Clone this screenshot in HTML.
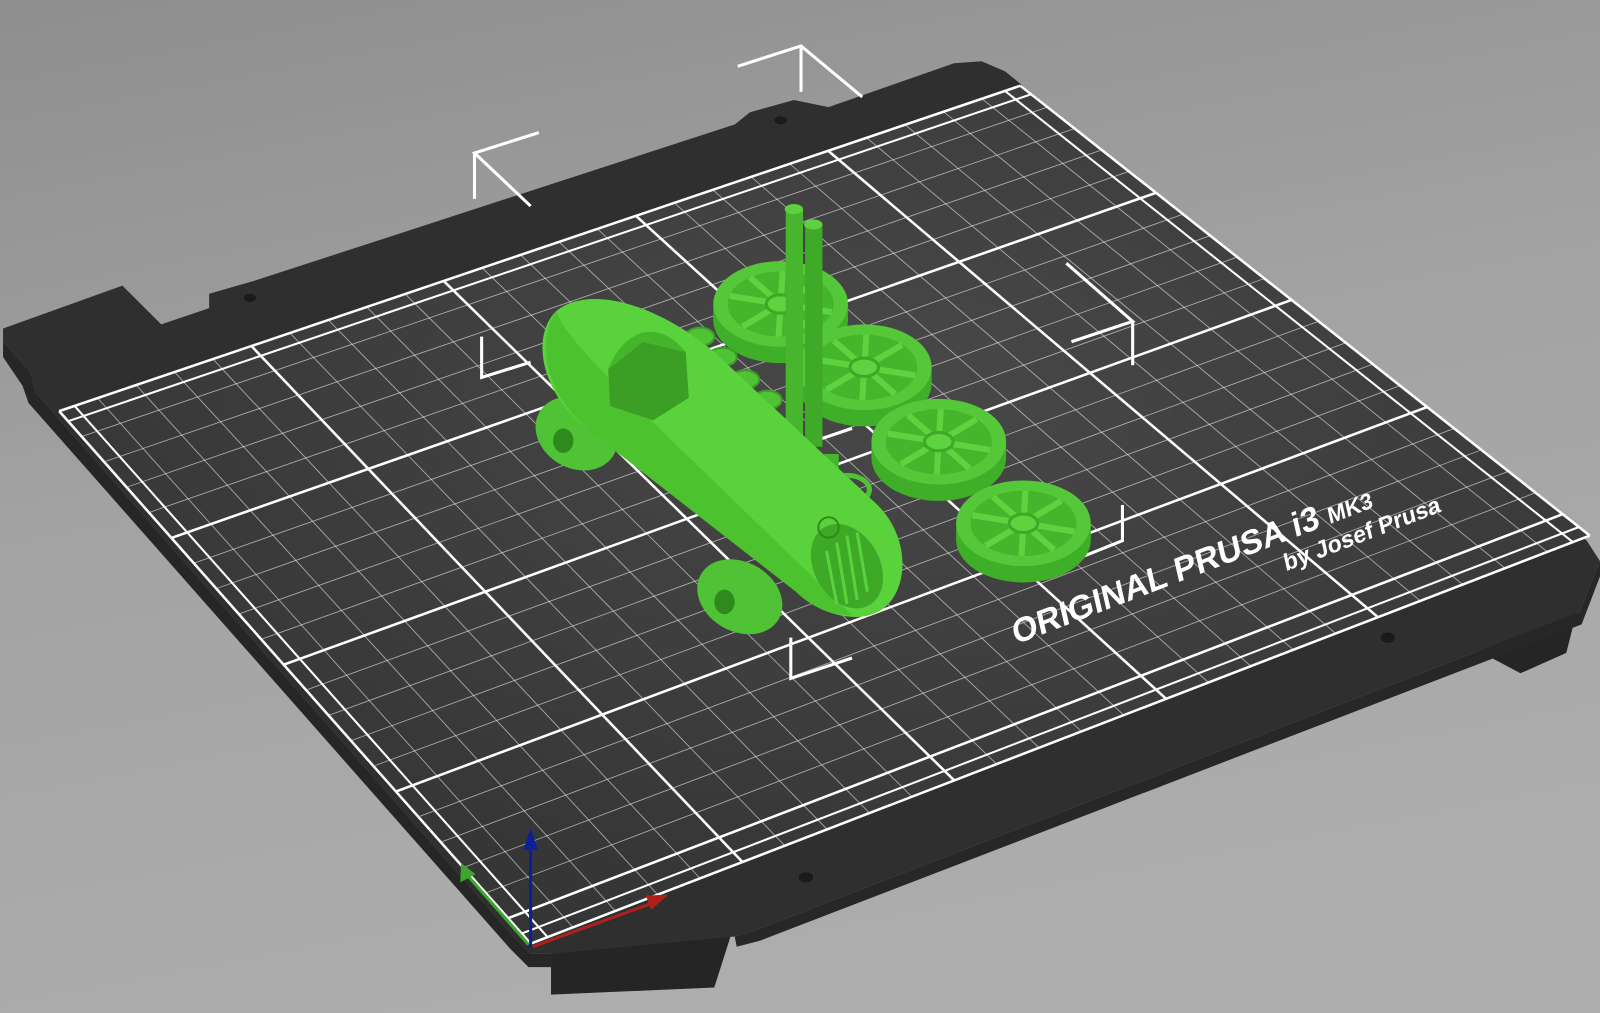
<!DOCTYPE html>
<html><head><meta charset="utf-8"><style>
html,body{margin:0;padding:0;width:1600px;height:1013px;overflow:hidden;background:#a4a4a4}
svg{display:block}
</style></head><body>
<svg id="s" width="1600" height="1013" viewBox="0 0 1568 993" preserveAspectRatio="none" xmlns="http://www.w3.org/2000/svg">
<defs>
<linearGradient id="bg" x1="0" y1="0" x2="0.3" y2="1">
<stop offset="0" stop-color="#8e8e8e"/><stop offset="0.5" stop-color="#a3a3a3"/><stop offset="1" stop-color="#adadad"/>
</linearGradient>
<radialGradient id="gl" cx="0.55" cy="0.35" r="0.6">
<stop offset="0" stop-color="#484848"/><stop offset="1" stop-color="#363636"/>
</radialGradient>
</defs>
<rect width="1568" height="993" fill="url(#bg)"/>
<!-- bed bottom tabs -->
<polygon points="540,975 700,968 720,905 540,930" fill="#252525"/>
<polygon points="1425,615 1545,600 1535,640 1490,660 1430,628" fill="#252525"/>
<!-- bed -->
<polygon fill="#2f2f2f" points="3,322 120,280 158,318 205,302 205,288 250,275 720,122 735,110 778,98 812,105 935,62 962,60 985,70 1555,530 1568,550 1548,600 740,912 720,918 540,935 520,935 505,920 35,385 30,365 3,335"/>
<polygon fill="#262626" points="3,335 30,365 35,385 505,920 520,935 540,935 540,948 518,948 500,930 28,395 22,378 3,350"/>
<polygon fill="#272727" points="1568,550 1548,600 740,912 720,918 722,928 745,922 1550,612 1568,565"/>
<!-- grid plate -->
<polygon id="plate" fill="url(#gl)" points="58,403 1000,84 1558,525 520,925"/>
<g id="grid" stroke="#fff" fill="none"></g>
<!-- holes -->
<ellipse cx="245" cy="292" rx="6" ry="4" fill="#1a1a1a"/>
<ellipse cx="765" cy="118" rx="6" ry="4" fill="#1a1a1a"/>
<ellipse cx="1360" cy="625" rx="7" ry="5" fill="#1a1a1a"/>
<ellipse cx="790" cy="860" rx="7" ry="5" fill="#1a1a1a"/>
<!-- text -->
<g fill="#fff" font-family="Liberation Sans, sans-serif" font-weight="bold">
<text x="0" y="0" font-size="33" transform="translate(995,632) rotate(-21) skewX(-8)">ORIGINAL PRUSA i3 <tspan font-size="22">MK3</tspan></text>
<text x="0" y="0" font-size="23" transform="translate(1260,560) rotate(-21) skewX(-8)">by Josef Prusa</text>
</g>
<!-- bounding box corners -->
<g stroke="#fff" stroke-width="3" fill="none">
<polyline points="723,65 785,45 845,95"/><line x1="785" y1="45" x2="785" y2="90"/>
<polyline points="528,130 465,150 520,202"/><line x1="465" y1="150" x2="465" y2="195"/>
<polyline points="1045,258 1110,315 1050,335"/><line x1="1110" y1="315" x2="1110" y2="358"/>
<polyline points="472,330 472,370 520,355"/>
<polyline points="775,485 775,440 835,420"/>
<polyline points="1100,495 1100,530 1045,552"/>
<polyline points="775,625 775,665 835,645"/>
</g>
<!-- green model -->
<g id="m">
<g id="w1">
<ellipse cx="765" cy="314" rx="66" ry="42" fill="#3fae28"/>
<rect x="699" y="298" width="132" height="16" fill="#3fae28"/>
<ellipse cx="765" cy="298" rx="66" ry="42" fill="#55c83a"/>
<ellipse cx="765" cy="298" rx="52" ry="32" fill="#45b52c"/>
<g stroke="#5dd340" stroke-width="6"><line x1="715" y1="290" x2="815" y2="306"/><line x1="735" y1="272" x2="795" y2="324"/><line x1="767" y1="266" x2="763" y2="330"/><line x1="802" y1="276" x2="728" y2="320"/></g>
<ellipse cx="765" cy="298" rx="14" ry="9" fill="#5dd340" stroke="#3ea827" stroke-width="3"/>
</g>
<use href="#w1" transform="translate(82,62)"/>
<use href="#w1" transform="translate(155,135)"/>
<use href="#w1" transform="translate(238,215)"/>
<g fill="#4fc236" stroke="#3a9e24" stroke-width="2">
<ellipse cx="686" cy="330" rx="14" ry="9"/><ellipse cx="708" cy="350" rx="14" ry="9"/><ellipse cx="730" cy="372" rx="14" ry="9"/><ellipse cx="752" cy="392" rx="14" ry="9"/>
</g>
<rect x="770" y="205" width="17" height="225" fill="#47b52d"/>
<rect x="789" y="220" width="17" height="218" fill="#3fa928"/>
<ellipse cx="778" cy="205" rx="9" ry="5" fill="#5ed141"/><ellipse cx="797" cy="220" rx="9" ry="5" fill="#5ed141"/>
<!-- rear axle wheels -->
<ellipse cx="565" cy="425" rx="42" ry="34" fill="#4fc236" transform="rotate(30 565 425)"/>
<ellipse cx="552" cy="432" rx="10" ry="12" fill="#2e8a1c"/>
<ellipse cx="725" cy="585" rx="44" ry="34" fill="#4fc236" transform="rotate(30 725 585)"/>
<ellipse cx="710" cy="590" rx="10" ry="12" fill="#2e8a1c"/>
<ellipse cx="855" cy="540" rx="28" ry="22" fill="#4fc236" transform="rotate(30 855 540)"/>
<rect x="808" y="445" width="14" height="50" fill="#45b52c"/>
<ellipse cx="830" cy="480" rx="22" ry="14" fill="none" stroke="#4fc236" stroke-width="5"/>
<!-- body -->
<path d="M545,305 C575,280 640,295 700,345 L860,495 C895,530 890,585 860,600 C835,612 800,600 780,580 L575,420 C530,385 520,330 545,305 Z" fill="#5ad23c"/>
<path d="M545,305 C525,335 535,385 575,420 L780,580 C800,598 815,603 835,603 L610,385 C580,352 555,330 545,305 Z" fill="#4cc22f"/>
<polygon points="596,362 630,335 672,345 675,390 640,412 598,398" fill="#3b9e25"/>
<path d="M596,362 C612,322 645,312 672,345 L630,335 Z" fill="#45b52c"/>
<ellipse cx="830" cy="555" rx="32" ry="44" fill="#3ea827" transform="rotate(-30 830 555)"/>
<g stroke="#5ad23c" stroke-width="3"><line x1="810" y1="540" x2="820" y2="592"/><line x1="820" y1="532" x2="830" y2="592"/><line x1="830" y1="525" x2="840" y2="588"/><line x1="840" y1="522" x2="850" y2="580"/></g>
<circle cx="812" cy="517" r="10" fill="none" stroke="#2f8a1c" stroke-width="2"/>
</g>
<!-- axes -->
<g stroke-width="3">
<line x1="520" y1="928" x2="520" y2="830" stroke="#0b1f9a"/><polygon points="513,833 520,812 527,833" fill="#0b1f9a"/>
<line x1="522" y1="928" x2="640" y2="885" stroke="#b0201a"/><polygon points="633,878 655,877 638,892" fill="#b0201a"/>
<line x1="518" y1="926" x2="458" y2="858" stroke="#3aa82a"/><polygon points="451,865 452,846 466,857" fill="#3aa82a"/>
</g>
</svg>
<script>
(function(){
var TL=[58,403],TR=[1000,84],BR=[1558,525],BL=[520,925];
function P(u,v){
 var top=[TL[0]+(TR[0]-TL[0])*u,TL[1]+(TR[1]-TL[1])*u];
 var bot=[BL[0]+(BR[0]-BL[0])*u,BL[1]+(BR[1]-BL[1])*u];
 return [top[0]+(bot[0]-top[0])*v,top[1]+(bot[1]-top[1])*v];}
var g=document.getElementById('grid'),h='';
function L(a,b,w,o){h+='<line x1="'+a[0].toFixed(1)+'" y1="'+a[1].toFixed(1)+'" x2="'+b[0].toFixed(1)+'" y2="'+b[1].toFixed(1)+'" stroke-width="'+w+'" stroke-opacity="'+o+'"/>';}
var NX=25,NY=21;
for(var i=0;i<=NX;i++){var u=i/NX;if(i%5==0)L(P(u,0),P(u,1),2.5,1);else L(P(u,0),P(u,1),0.9,0.55);}
for(var j=0;j<=NY;j++){var v=j/NY;if(j%5==0||j==NY)L(P(0,v),P(1,v),2.5,1);else L(P(0,v),P(1,v),0.9,0.55);}
var e=0.4;L(P(0,e/NY),P(1,e/NY),2,1);L(P(0,1-e/NY),P(1,1-e/NY),2,1);
L(P(e/NX,0),P(e/NX,1),2,1);L(P(1-e/NX,0),P(1-e/NX,1),2,1);
g.innerHTML=h;
})();
</script>
</body></html>
